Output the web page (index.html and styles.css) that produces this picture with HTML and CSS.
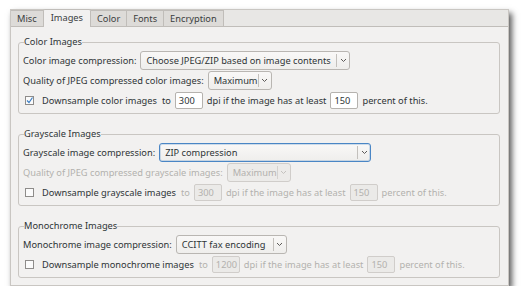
FILE: index.html
```html
<!DOCTYPE html>
<html lang="en">
<head>
    <meta charset="UTF-8">
    <title>PDF Options - Images</title>
    <link rel="stylesheet" href="styles.css">
</head>
<body>
    <div class="window">
        <div class="tabbar">
            <div class="tab">Misc</div>
            <div class="tab active">Images</div>
            <div class="tab">Color</div>
            <div class="tab">Fonts</div>
            <div class="tab">Encryption</div>
        </div>

        <div class="page">
            <fieldset class="group">
                <legend>Color Images</legend>
                <div class="row">
                    <span>Color image compression:</span>
                    <div class="combo combo-color"><span class="combo-text">Choose JPEG/ZIP based on image contents</span><span class="arrow"><svg width="7" height="5" viewBox="0 0 7 5"><path d="M1 1l2.5 2.5L6 1" fill="none" stroke="#5d5b59" stroke-width="1"/></svg></span></div>
                </div>
                <div class="row">
                    <span>Quality of JPEG compressed color images:</span>
                    <div class="combo combo-quality"><span class="combo-text">Maximum</span><span class="arrow"><svg width="7" height="5" viewBox="0 0 7 5"><path d="M1 1l2.5 2.5L6 1" fill="none" stroke="#5d5b59" stroke-width="1"/></svg></span></div>
                </div>
                <div class="row">
                    <span class="check checked"><svg width="9" height="9" viewBox="0 0 9 9"><path d="M2 4.5l2 2L7.5 1.5" fill="none" stroke="#3d7fc4" stroke-width="1.2"/></svg></span>
                    <span>Downsample color images</span>
                    <span class="to">to</span>
                    <span class="field">300</span>
                    <span>dpi if the image has at least</span>
                    <span class="field">150</span>
                    <span>percent of this.</span>
                </div>
            </fieldset>

            <fieldset class="group">
                <legend>Grayscale Images</legend>
                <div class="row">
                    <span>Grayscale image compression:</span>
                    <div class="combo combo-gray focus"><span class="combo-text">ZIP compression</span><span class="arrow"><svg width="7" height="5" viewBox="0 0 7 5"><path d="M1 1l2.5 2.5L6 1" fill="none" stroke="#5d5b59" stroke-width="1"/></svg></span></div>
                </div>
                <div class="row disabled">
                    <span>Quality of JPEG compressed grayscale images:</span>
                    <div class="combo combo-quality"><span class="combo-text">Maximum</span><span class="arrow"><svg width="7" height="5" viewBox="0 0 7 5"><path d="M1 1l2.5 2.5L6 1" fill="none" stroke="#c4c2bf" stroke-width="1"/></svg></span></div>
                </div>
                <div class="row">
                    <span class="check"></span>
                    <span>Downsample grayscale images</span>
                    <span class="to muted">to</span>
                    <span class="field off">300</span>
                    <span class="muted">dpi if the image has at least</span>
                    <span class="field off">150</span>
                    <span class="muted">percent of this.</span>
                </div>
            </fieldset>

            <fieldset class="group">
                <legend>Monochrome Images</legend>
                <div class="row">
                    <span>Monochrome image compression:</span>
                    <div class="combo combo-mono"><span class="combo-text">CCITT fax encoding</span><span class="arrow"><svg width="7" height="5" viewBox="0 0 7 5"><path d="M1 1l2.5 2.5L6 1" fill="none" stroke="#5d5b59" stroke-width="1"/></svg></span></div>
                </div>
                <div class="row">
                    <span class="check"></span>
                    <span>Downsample monochrome images</span>
                    <span class="to muted">to</span>
                    <span class="field off">1200</span>
                    <span class="muted">dpi if the image has at least</span>
                    <span class="field off">150</span>
                    <span class="muted">percent of this.</span>
                </div>
            </fieldset>
        </div>
    </div>
</body>
</html>
```

FILE: styles.css
```css
* { margin: 0; padding: 0; box-sizing: border-box; }
body { background: #ffffff; font-family: "Noto Sans", "DejaVu Sans", sans-serif; font-size: 9.25px; color: #2e3436; }
.window { margin: 9px 0 0 10px; width: 499px; height: 277px; background: #f2f1f0; border: 1px solid #c9c6c2; box-shadow: 3px 4px 6px rgba(0, 0, 0, 0.65); }
.tabbar { display: flex; height: 17px; background: #e8e7e5; border-bottom: 1px solid #c0bdb9; align-items: flex-end; }
.tab { height: 16px; line-height: 15px; padding: 0 6px; background: #dddbd8; border: 1px solid #c0bdb9; border-bottom: none; border-left: none; color: #3a3d3e; }
.tab:first-child { border-left: none; }
.tab.active { height: 18px; margin-bottom: -1px; line-height: 16px; background: #f2f1f0; border-radius: 2px 2px 0 0; border-left: 1px solid #c0bdb9; margin-left: -1px; padding: 0 7px; }
.page { padding: 9px 8px 0 7px; display: flex; flex-direction: column; gap: 14px; }
.group { border: 1px solid #c9c6c2; border-radius: 3px; padding: 2px 4px 3px 4px; }
.group legend { padding: 0; margin-left: 1px; line-height: 12px; color: #2e3436; }
.row { display: flex; align-items: center; height: 19px; gap: 4px; white-space: nowrap; margin-top: 1px; }
.row .to { margin-left: 1px; }
.combo { display: flex; align-items: center; height: 19px; border: 1px solid #b9b6b2; border-radius: 3px; background: linear-gradient(#f9f8f7, #efeeec); }
.combo-text { flex: 1; padding-left: 5px; overflow: hidden; }
.arrow { display: flex; align-items: center; justify-content: center; width: 13px; height: 13px; border-left: 1px solid #c3c0bc; }
.combo-color { width: 210px; }
.combo-quality { width: 64px; }
.combo-gray { width: 212px; }
.combo-mono { width: 111px; }
.combo.focus { border-color: #4a86c5; box-shadow: inset 0 0 0 1px rgba(74, 134, 197, 0.25); }
.disabled { color: #b3b1ae; }
.disabled .combo { background: #ecebe9; border-color: #d0cdca; }
.disabled .arrow { border-left-color: #d5d2cf; }
.muted { color: #b3b1ae; }
.check { width: 9px; height: 9px; border: 1px solid #8e8c8a; background: #fbfbfb; margin: 0 4px 0 2px; display: flex; }
.check svg { margin: -1px; }
.field { width: 28px; height: 17px; line-height: 15px; padding-left: 3px; border: 1px solid #b5b2ae; border-radius: 2px; background: #ffffff; }
.field.off { background: #ebeae8; border-color: #d0cdca; color: #b3b1ae; }
```
